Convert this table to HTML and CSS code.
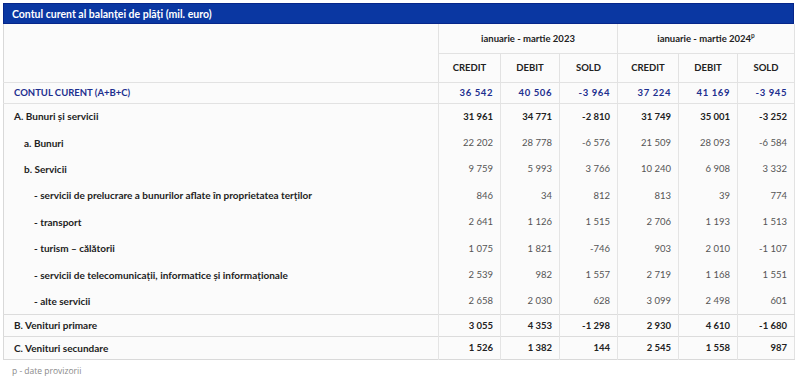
FILE: index.html
```html
<!DOCTYPE html>
<html lang="ro">
<head>
<meta charset="utf-8">
<title>Contul curent al balanței de plăți</title>
<link rel="stylesheet" href="styles.css">
</head>
<body>
<div class="wrap">
  <div class="title">Contul curent al balanței de plăți (mil. euro)</div>
  <table class="bop">
    <colgroup>
      <col class="c-label">
      <col class="c-credit">
      <col class="c-debit">
      <col class="c-sold">
      <col class="c-credit2">
      <col class="c-debit2">
      <col class="c-sold2">
    </colgroup>
    <thead>
      <tr class="grp">
        <th rowspan="2" class="blank"></th>
        <th colspan="3">ianuarie - martie 2023</th>
        <th colspan="3">ianuarie - martie 2024<sup>p</sup></th>
      </tr>
      <tr class="sub">
        <th>CREDIT</th><th>DEBIT</th><th>SOLD</th>
        <th>CREDIT</th><th>DEBIT</th><th>SOLD</th>
      </tr>
    </thead>
    <tbody>
      <tr class="total">
        <td class="lbl">CONTUL CURENT (A+B+C)</td>
        <td>36 542</td><td>40 506</td><td>-3 964</td><td>37 224</td><td>41 169</td><td>-3 945</td>
      </tr>
      <tr class="strong lvl1 first">
        <td class="lbl">A. Bunuri și servicii</td>
        <td>31 961</td><td>34 771</td><td>-2 810</td><td>31 749</td><td>35 001</td><td>-3 252</td>
      </tr>
      <tr class="lvl2">
        <td class="lbl">a. Bunuri</td>
        <td>22 202</td><td>28 778</td><td>-6 576</td><td>21 509</td><td>28 093</td><td>-6 584</td>
      </tr>
      <tr class="lvl2">
        <td class="lbl">b. Servicii</td>
        <td>9 759</td><td>5 993</td><td>3 766</td><td>10 240</td><td>6 908</td><td>3 332</td>
      </tr>
      <tr class="lvl3">
        <td class="lbl">- servicii de prelucrare a bunurilor aflate în proprietatea terților</td>
        <td>846</td><td>34</td><td>812</td><td>813</td><td>39</td><td>774</td>
      </tr>
      <tr class="lvl3">
        <td class="lbl">- transport</td>
        <td>2 641</td><td>1 126</td><td>1 515</td><td>2 706</td><td>1 193</td><td>1 513</td>
      </tr>
      <tr class="lvl3">
        <td class="lbl">- turism – călătorii</td>
        <td>1 075</td><td>1 821</td><td>-746</td><td>903</td><td>2 010</td><td>-1 107</td>
      </tr>
      <tr class="lvl3">
        <td class="lbl">- servicii de telecomunicații, informatice și informaționale</td>
        <td>2 539</td><td>982</td><td>1 557</td><td>2 719</td><td>1 168</td><td>1 551</td>
      </tr>
      <tr class="lvl3 last">
        <td class="lbl">- alte servicii</td>
        <td>2 658</td><td>2 030</td><td>628</td><td>3 099</td><td>2 498</td><td>601</td>
      </tr>
      <tr class="strong lvl1 ruled">
        <td class="lbl">B. Venituri primare</td>
        <td>3 055</td><td>4 353</td><td>-1 298</td><td>2 930</td><td>4 610</td><td>-1 680</td>
      </tr>
      <tr class="strong lvl1 ruled">
        <td class="lbl">C. Venituri secundare</td>
        <td>1 526</td><td>1 382</td><td>144</td><td>2 545</td><td>1 558</td><td>987</td>
      </tr>
    </tbody>
  </table>
  <p class="note">p - date provizorii</p>
</div>
</body>
</html>
```
FILE: styles.css
```css
* { box-sizing: border-box; }
html, body { margin: 0; padding: 0; background: #ffffff; }
body { font-family: Lato, "Open Sans", sans-serif; }

.wrap {
  padding: 3px 6px 0 3px;
}

.title {
  height: 21px;
  line-height: 20px;
  background: #0a37a2;
  color: #ffffff;
  font-weight: 700;
  font-size: 10.5px;
  padding-left: 8px;
  border: 1px solid #06268a;
}

.bop {
  width: 791px;
  border-collapse: collapse;
  table-layout: fixed;
  background: #fbfbfb;
  border-left: 1px solid #d9d9d9;
  border-right: 1px solid #e2e2e2;
  border-bottom: 1px solid #d9d9d9;
  font-size: 9.5px;
  color: #222;
}

.c-label { width: 435px; }
.c-credit { width: 62px; }
.c-debit { width: 59px; }
.c-sold { width: 58px; }
.c-credit2 { width: 61px; }
.c-debit2 { width: 59px; }
.c-sold2 { width: 57px; }

.bop th {
  font-weight: 700;
  color: #222;
  text-align: center;
  border-left: 1px solid #e2e2e2;
  border-bottom: 1px solid #e2e2e2;
  padding: 0;
}
.bop th.blank { border-left: none; }
.bop .grp th { height: 29px; font-size: 9.5px; }
.bop .sub th { height: 29px; }
.bop sup { font-size: 6.5px; vertical-align: 4px; line-height: 0; color: #333; }

.bop td {
  text-align: right;
  padding: 0 7px 0 0;
  border-left: 1px solid #e4e4e4;
  color: #555;
  height: 26.4px;
  white-space: nowrap;
}
.bop td.lbl {
  text-align: left;
  border-left: none;
  color: #222;
  font-weight: 700;
  font-size: 10px;
  padding-left: 10px;
}

.bop .total td {
  height: 21px;
  color: #1d2f8f;
  font-weight: 700;
  letter-spacing: 0.6px;
  border-bottom: 1px solid #e2e2e2;
}
.bop .total td.lbl {
  color: #1d2f8f;
  font-size: 9.5px;
  letter-spacing: 0;
}

.bop .strong td { color: #222; font-weight: 700; }
.bop .lvl2 td.lbl { padding-left: 20px; }
.bop .lvl3 td.lbl { padding-left: 30px; }

.bop .ruled td {
  border-top: 1px solid #dcdcdc;
  height: 22.5px;
}

.note {
  margin: 5px 0 0 9px;
  font-size: 8.5px;
  color: #8a8a8a;
  font-family: "Open Sans", sans-serif;
}
```
